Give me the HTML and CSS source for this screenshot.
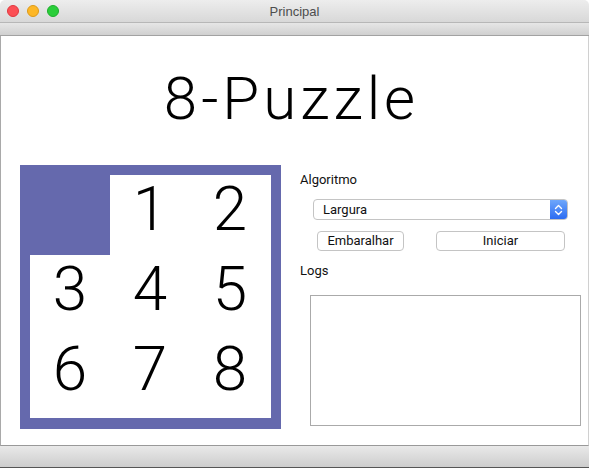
FILE: index.html
```html
<!DOCTYPE html>
<html>
<head>
<meta charset="utf-8">
<link rel="stylesheet" href="styles.css">
</head>
<body>
<div class="window">
  <div class="titlebar">
    <div class="lights">
      <span class="light red"></span>
      <span class="light yellow"></span>
      <span class="light green"></span>
    </div>
    <div class="wtitle">Principal</div>
    <div></div>
  </div>
  <div class="toolbar"></div>
  <div class="content">
    <h1 class="title">8-Puzzle</h1>
    <div class="main">
      <div class="board">
        <div class="grid">
          <div class="tile empty"></div>
          <div class="tile">1</div>
          <div class="tile">2</div>
          <div class="tile">3</div>
          <div class="tile">4</div>
          <div class="tile">5</div>
          <div class="tile">6</div>
          <div class="tile">7</div>
          <div class="tile">8</div>
        </div>
      </div>
      <div class="panel">
        <div class="label">Algoritmo</div>
        <div class="select">
          <span class="select-text">Largura</span>
          <span class="stepper">
            <svg width="9" height="12" viewBox="0 0 9 12"><path d="M1.5 4.5 L4.5 1.5 L7.5 4.5 M1.5 7.5 L4.5 10.5 L7.5 7.5" fill="none" stroke="#fff" stroke-width="1.4" stroke-linecap="round" stroke-linejoin="round"/></svg>
          </span>
        </div>
        <div class="buttons">
          <button class="btn btn-shuffle">Embaralhar</button>
          <button class="btn btn-start">Iniciar</button>
        </div>
        <div class="label logs-label">Logs</div>
        <div class="logs"></div>
      </div>
    </div>
  </div>
  <div class="bottombar"></div>
</div>
</body>
</html>
```
FILE: styles.css
```css
* { box-sizing: border-box; }
html, body { margin: 0; padding: 0; background: #fff; }
body { font-family: Roboto, "Liberation Sans", sans-serif; }

.window {
  width: 589px;
  height: 468px;
  display: flex;
  flex-direction: column;
  overflow: hidden;
}

.titlebar {
  height: 22px;
  flex: none;
  display: grid;
  grid-template-columns: 1fr auto 1fr;
  align-items: center;
  background: linear-gradient(#ededed, #d8d8d8);
  border-top-left-radius: 5px;
  border-top-right-radius: 5px;
}
.lights { display: flex; gap: 8px; padding-left: 7px; }
.light { width: 12px; height: 12px; border-radius: 50%; display: block; }
.red { background: #fc4f55; border: 1px solid #e0383f; }
.yellow { background: #fdb726; border: 1px solid #dd9a18; }
.green { background: #2ace3a; border: 1px solid #1eae2c; }
.wtitle {
  font-family: "Liberation Sans", Arial, sans-serif;
  font-size: 13px;
  color: #4d4d4d;
}

.toolbar {
  height: 14px;
  flex: none;
  border-top: 1px solid #b7b7b7;
  border-bottom: 1px solid #a2a2a2;
  background: linear-gradient(#e6e6e6, #d0d0d0);
}

.content {
  flex: 1;
  background: #fff;
  border-left: 1px solid #a9a9a9;
  border-right: 1px solid #d0d0d0;
  border-bottom: 1px solid #999;
}

.title {
  margin: 34px 0 0;
  padding-right: 6px;
  text-align: center;
  font-weight: 300;
  font-size: 60px;
  line-height: 57px;
  letter-spacing: 4px;
  color: #000;
}

.main {
  display: flex;
  margin-top: 38px;
}

.board {
  margin-left: 19px;
  background: #6569ad;
  padding: 10px 10px 11px 10px;
  flex: none;
}
.grid {
  width: 241px;
  height: 243px;
  background: #fff;
  display: grid;
  grid-template-columns: 80px 80px 80px;
  grid-template-rows: 80px 80px 80px;
  align-content: start;
}
.tile {
  display: flex;
  align-items: center;
  justify-content: center;
  font-weight: 300;
  font-size: 62px;
  line-height: 1;
  padding-bottom: 12px;
  color: #000;
}
.tile.empty { background: #6569ad; }

.panel {
  flex: 1;
  padding-left: 19px;
  padding-top: 7px;
  display: flex;
  flex-direction: column;
}
.label {
  font-size: 13px;
  color: #111;
  line-height: 16px;
}

.select {
  margin: 11px 0 0 13px;
  width: 255px;
  height: 21px;
  border: 1px solid #c4c4c4;
  border-radius: 4px;
  display: flex;
  align-items: center;
  overflow: hidden;
  background: #fff;
}
.select-text {
  flex: 1;
  font-size: 13px;
  padding-left: 9px;
  color: #111;
}
.stepper {
  width: 17px;
  height: 100%;
  display: flex;
  align-items: center;
  justify-content: center;
  background: linear-gradient(#6ea7fb, #2c6cf2);
}

.buttons {
  display: flex;
  margin: 11px 0 0 17px;
  gap: 32px;
}
.btn {
  height: 20px;
  background: #fff;
  border: 1px solid #c4c4c4;
  border-radius: 4px;
  font-family: Roboto, "Liberation Sans", sans-serif;
  font-size: 13px;
  color: #111;
  padding: 0;
  line-height: 18px;
}
.btn-shuffle { width: 87px; }
.btn-start { width: 129px; }

.logs-label { margin-top: 12px; }

.logs {
  margin: 16px 0 0 10px;
  width: 271px;
  height: 131px;
  border: 1px solid #aaa;
}

.bottombar {
  height: 22px;
  flex: none;
  background: linear-gradient(#e9e9e9, #cdcdcd);
  border-bottom: 1px solid #555;
}
```
